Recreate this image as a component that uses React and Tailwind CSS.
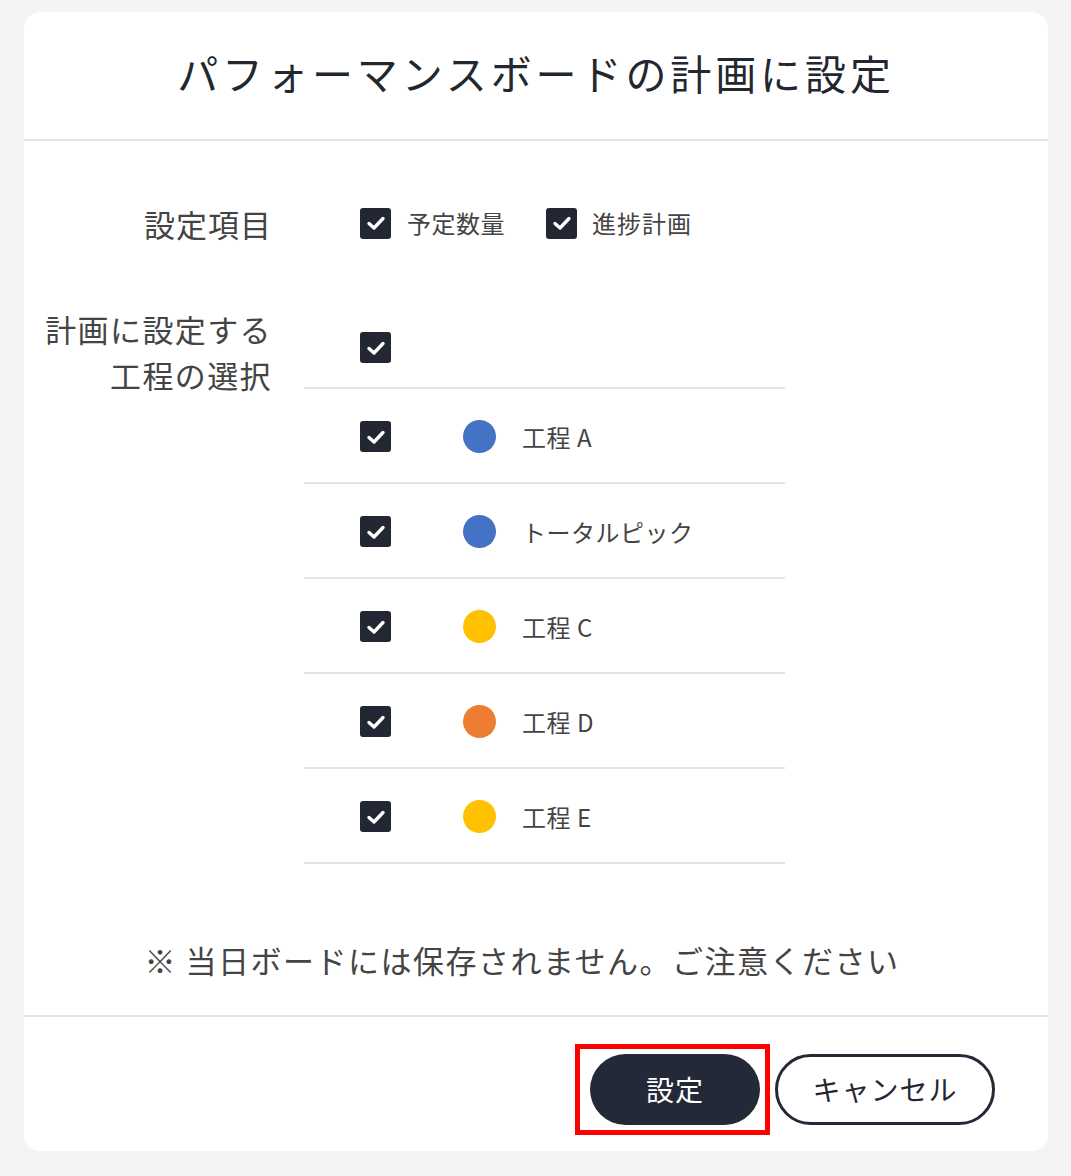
const FONT = {
  fontFamily: '"Noto Sans CJK JP", "Noto Sans", sans-serif',
};

// ─── CHECKBOX ─────────────────────────
function Check() {
  return (
    <span className="flex h-[31px] w-[31px] shrink-0 items-center justify-center rounded-[3px] bg-[#222733]">
      <svg className="h-[24px] w-[24px]" viewBox="0 0 24 24" fill="none">
        <path
          d="M5 12.5 L10 17 L19 7.5"
          stroke="#fff"
          strokeWidth="3.4"
          strokeLinecap="round"
          strokeLinejoin="round"
        />
      </svg>
    </span>
  );
}

const PROCESSES = [
  { name: "工程 A", color: "bg-[#4472c4]" },
  { name: "トータルピック", color: "bg-[#4472c4]" },
  { name: "工程 C", color: "bg-[#ffc000]" },
  { name: "工程 D", color: "bg-[#ed7d31]" },
  { name: "工程 E", color: "bg-[#ffc000]" },
];

export default function App() {
  return (
    <div className="min-h-[1176px] w-[1071px] bg-[#f4f4f4] pt-[12px]" style={FONT}>
      <div className="mx-[24px] w-[1024px] rounded-[16px] bg-white">
        {/* HEADER */}
        <div className="flex h-[129px] items-center justify-center border-b-2 border-[#e2e2e2] pb-[6px]">
          <h1 className="text-[41px] font-normal tracking-[3.9px] text-[#23272f]">
            パフォーマンスボードの計画に設定
          </h1>
        </div>

        {/* BODY */}
        <div className="pt-[58px] text-[#444]">
          <div className="flex h-[48px] items-center">
            <div className="w-[248px] text-right text-[31px] leading-none tracking-[1px]">設定項目</div>
            <div className="ml-[88px] flex items-center">
              <Check />
              <span className="ml-[16px] text-[24px] tracking-[0.5px]">予定数量</span>
              <span className="ml-[41px]" />
              <Check />
              <span className="ml-[15px] text-[24px] tracking-[1px]">進捗計画</span>
            </div>
          </div>

          <div className="mt-[59px] flex">
            <div className="w-[248px] text-right text-[31px] leading-[46px] tracking-[1.4px]">
              計画に設定する
              <br />
              工程の選択
            </div>
            <div className="ml-[32px] w-[481px]">
              <div className="flex h-[83px] items-center border-b-2 border-[#e4e4e4] pl-[56px] pt-[2px]">
                <Check />
              </div>
              {PROCESSES.map((p) => (
                <div
                  key={p.name}
                  className="flex h-[95px] items-center border-b-2 border-[#e4e4e4] pl-[56px] pt-[2px]"
                >
                  <Check />
                  <span className={`ml-[72px] h-[33px] w-[33px] rounded-full ${p.color}`} />
                  <span className="ml-[26px] text-[24px] tracking-[0.5px] text-[#444]">{p.name}</span>
                </div>
              ))}
            </div>
          </div>

          <div className="flex h-[153px] items-center justify-center border-b-2 border-[#e4e4e4] pr-[28px] pt-[42px] text-[31px] tracking-[1.5px] text-[#444]">
            ※ 当日ボードには保存されません。ご注意ください
          </div>
        </div>

        {/* FOOTER */}
        <div className="flex h-[134px] items-center justify-end pr-[53px] pt-[10px]">
          <div className="border-[5px] border-[#ff0000] py-[5px] pl-[10px] pr-[5px]">
            <button className="h-[71px] w-[170px] rounded-full bg-[#232936] text-[28px] tracking-[1px] text-white">
              設定
            </button>
          </div>
          <button className="ml-[5px] h-[71px] w-[220px] rounded-full border-[3px] border-[#232936] bg-white text-[28px] tracking-[1px] text-[#23272f]">
            キャンセル
          </button>
        </div>
      </div>
    </div>
  );
}
